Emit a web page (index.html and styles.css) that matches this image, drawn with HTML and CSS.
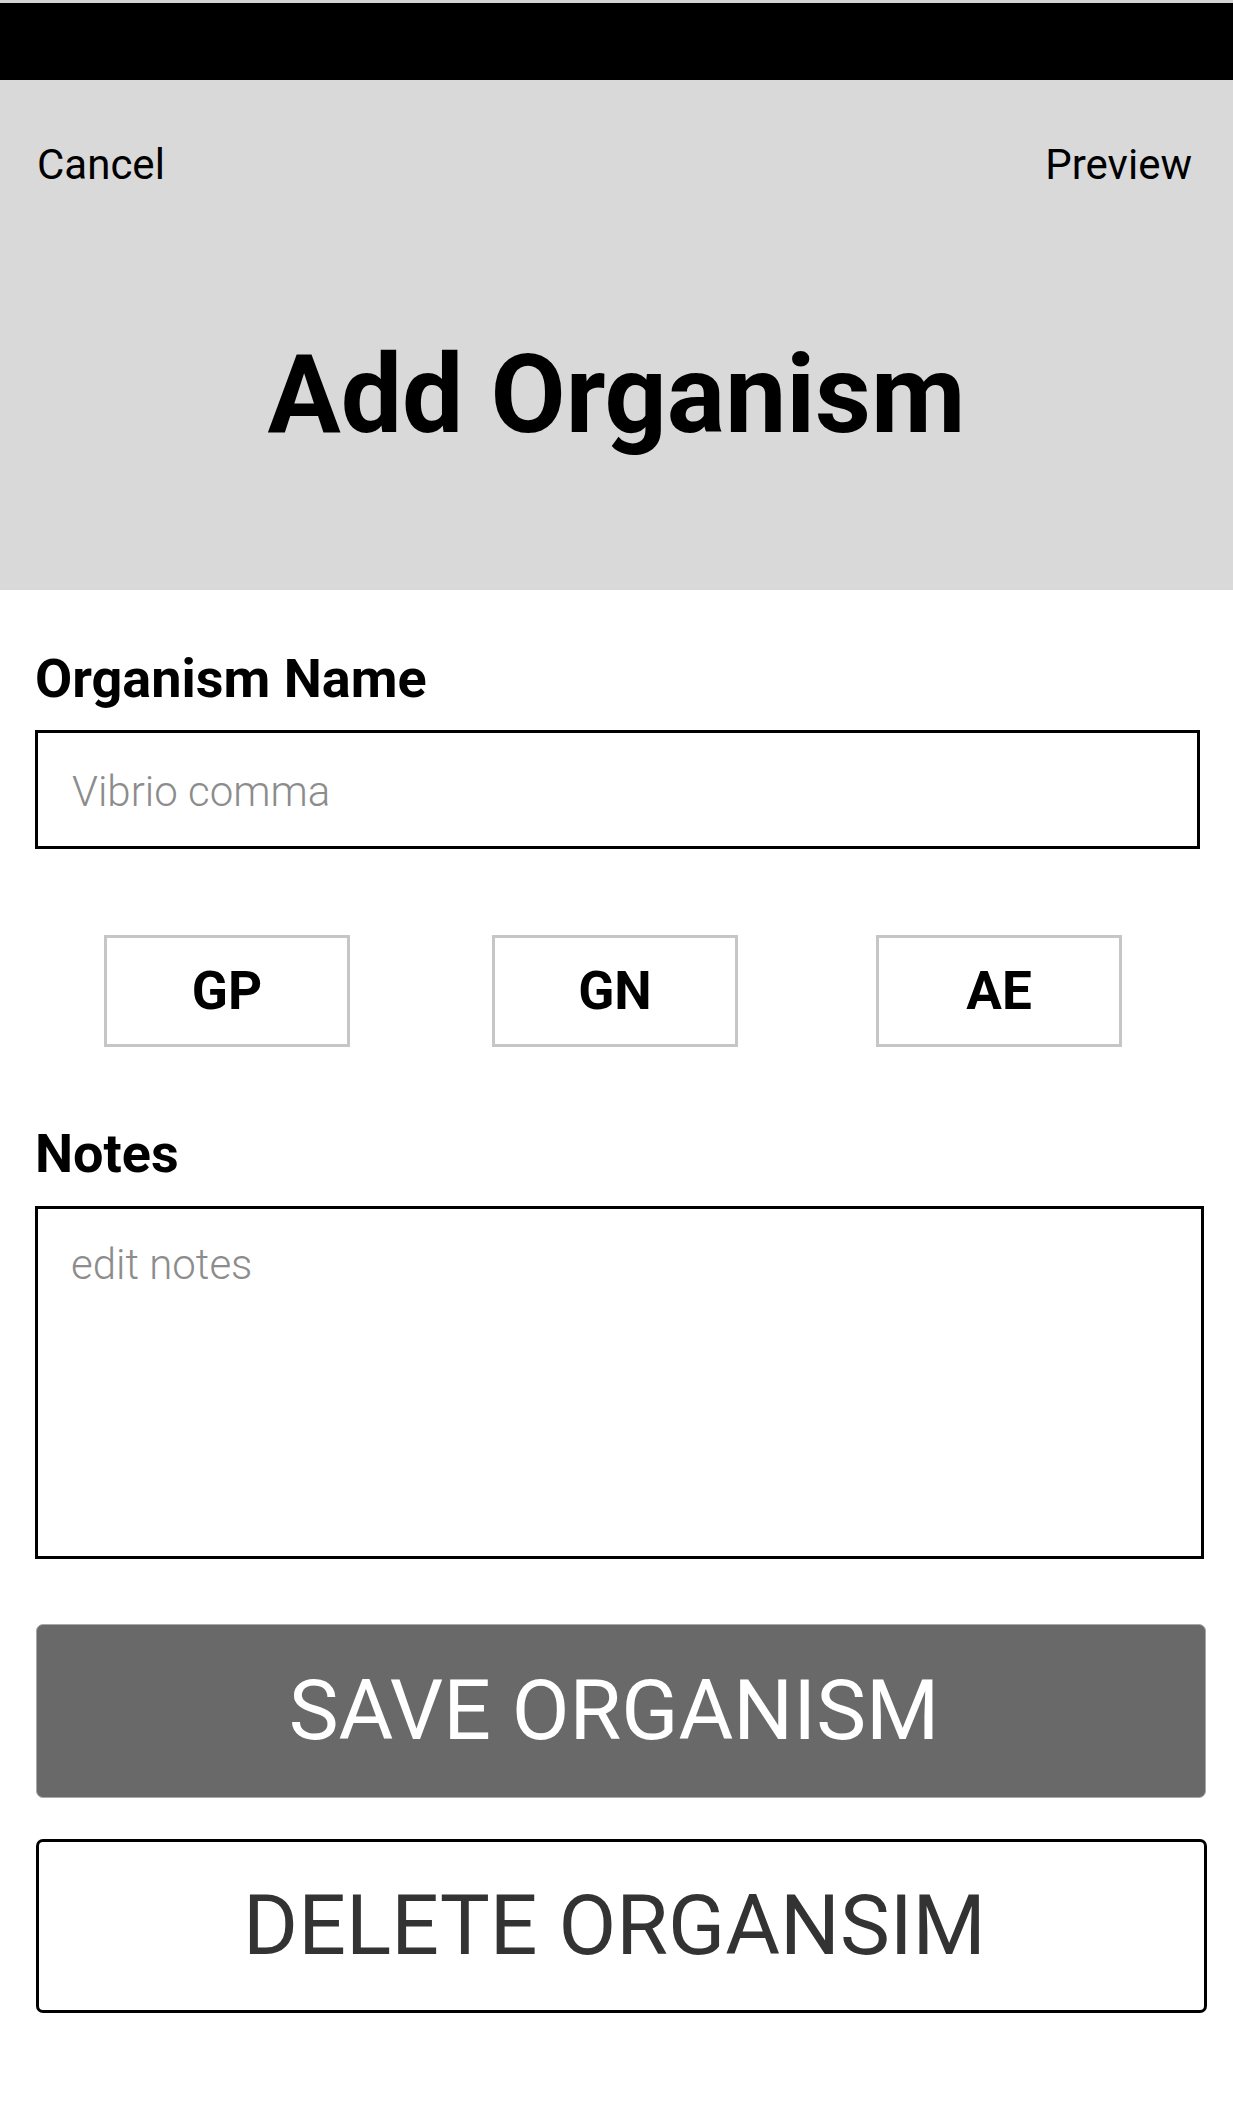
FILE: index.html
```html
<!DOCTYPE html>
<html lang="en">
<head>
<meta charset="utf-8">
<title>Add Organism</title>
<link rel="stylesheet" href="styles.css">
</head>
<body>
<div class="screen">
  <div class="statusbar"></div>
  <header class="header">
    <nav class="nav">
      <span class="nav-link">Cancel</span>
      <span class="nav-link">Preview</span>
    </nav>
    <h1 class="title">Add Organism</h1>
  </header>
  <main class="form">
    <label class="label label-name">Organism Name</label>
    <div class="field field-name"><span class="placeholder">Vibrio comma</span></div>
    <div class="chips">
      <div class="chip">GP</div>
      <div class="chip">GN</div>
      <div class="chip">AE</div>
    </div>
    <label class="label label-notes">Notes</label>
    <div class="field field-notes"><span class="placeholder">edit notes</span></div>
    <div class="btn btn-save">SAVE ORGANISM</div>
    <div class="btn btn-delete">DELETE ORGANSIM</div>
  </main>
</div>
</body>
</html>
```

FILE: styles.css
```css
* { box-sizing: border-box; }

html, body {
  margin: 0;
  padding: 0;
  background: #ffffff;
}

body {
  font-family: Roboto, "Noto Sans", "Liberation Sans", sans-serif;
  color: #000;
}

.screen {
  width: 1233px;
  min-height: 2103px;
  display: flex;
  flex-direction: column;
}

.statusbar {
  height: 80px;
  background: #000;
  border-top: 3px solid #d4d4d4;
}

.header {
  height: 510px;
  background: #d9d9d9;
  padding-top: 60px;
  display: flex;
  flex-direction: column;
}

.nav {
  display: flex;
  justify-content: space-between;
  padding: 0 41px 0 37px;
}

.nav-link {
  font-size: 42px;
  line-height: 50px;
  font-weight: 400;
  color: #000;
}

.title {
  margin: 141px 0 0;
  text-align: center;
  font-size: 109px;
  line-height: 128px;
  font-weight: 700;
  letter-spacing: 0;
}

.form {
  display: flex;
  flex-direction: column;
  padding-left: 35px;
}

.label {
  display: block;
  font-weight: 700;
}

.label-name {
  margin-top: 57px;
  font-size: 54px;
  line-height: 64px;
}

.label-notes {
  margin-top: 75px;
  font-size: 54px;
  line-height: 63px;
}

.field {
  border: 3px solid #000;
  background: #fff;
}

.placeholder {
  font-size: 42px;
  line-height: 49px;
  font-weight: 300;
  color: #8c8c8c;
}

.field-name {
  margin-top: 19px;
  width: 1165px;
  height: 119px;
  display: flex;
  align-items: center;
  padding: 3px 0 0 34px;
}

.field-notes {
  margin-top: 21px;
  width: 1169px;
  height: 353px;
  padding: 31px 0 0 33px;
}

.chips {
  display: flex;
  margin-top: 86px;
  padding-left: 69px;
}

.chip {
  width: 246px;
  height: 112px;
  border: 3px solid #c6c6c6;
  display: flex;
  align-items: center;
  justify-content: center;
  font-size: 53px;
  font-weight: 700;
  line-height: 62px;
}

.chip + .chip { margin-left: 138px; }
.chip:nth-child(2) { margin-left: 142px; }

.btn {
  width: 1170px;
  height: 174px;
  margin-left: 1px;
  border-radius: 7px;
  display: flex;
  align-items: center;
  justify-content: center;
  padding-right: 14px;
  font-size: 84px;
  line-height: 98px;
  font-weight: 400;
}

.btn-save {
  margin-top: 65px;
  background: #696969;
  border: 1px solid #a8a8a8;
  color: #fff;
}

.btn-delete {
  margin-top: 41px;
  width: 1171px;
  background: #fff;
  border: 3px solid #000;
  color: #333;
}
```
